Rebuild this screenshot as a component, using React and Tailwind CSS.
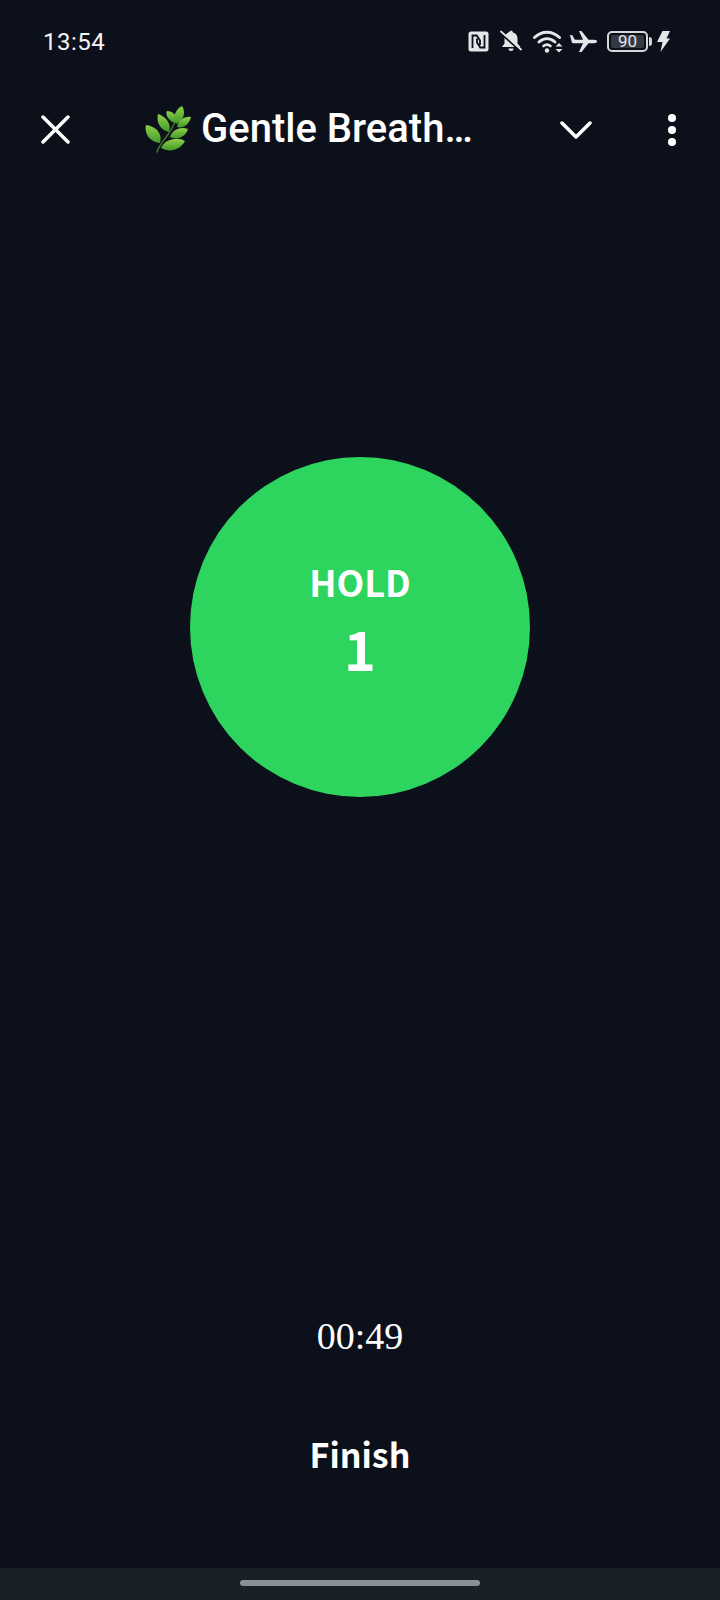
import React from 'react';

const StatusIcons = () => (
    <div className="flex items-center text-[#e4e6ea]">
        {/* NFC */}
        <svg width="21" height="21" viewBox="0 0 21 21">
            <rect x="0.500" y="0.500" width="20" height="20" rx="2.500" fill="#e4e6ea" />
            <path d="M4.500 17V4.500h4.300l3.200 5V14M16.500 4v12.500h-4.300L9 11.500V7.500" fill="none" stroke="#0c101a" strokeWidth="1.800" />
        </svg>
        {/* Bell muted */}
        <svg className="ml-[11px]" width="22" height="22" viewBox="0 0 22 22">
            <path d="M11 0.500a1.700 1.700 0 0 1 1.700 1.800C15.800 3.100 17.500 5.600 17.500 8.500v5l3 3.500H2l2.500-3.500v-5c0-1.500.4-2.900 1.200-4z" fill="#e4e6ea" />
            <path d="M8.500 18.500h5a2.500 2.500 0 0 1-5 0z" fill="#e4e6ea" />
            <path d="M1.500 3.500l18 16" stroke="#0c101a" strokeWidth="3" />
            <path d="M1 1.500l20 18" stroke="#e4e6ea" strokeWidth="1.800" strokeLinecap="round" />
        </svg>
        {/* Wifi */}
        <svg className="ml-[11px]" width="30" height="24" viewBox="0 0 30 24" fill="none">
            <path d="M1.500 8.500C9 1.500 19 1.500 26.500 8.500" stroke="#e4e6ea" strokeWidth="3" strokeLinecap="round" />
            <path d="M6 13c5-4.500 11-4.500 16 0" stroke="#e4e6ea" strokeWidth="3" strokeLinecap="round" />
            <path d="M10.500 17c2.500-2 4.500-2 7 0" stroke="#e4e6ea" strokeWidth="2.600" strokeLinecap="round" />
            <circle cx="14" cy="21.500" r="2.200" fill="#e4e6ea" />
            <path d="M26 14l3.500 3.500h-7zM26 23.500l3.500-3.500h-7z" fill="#e4e6ea" />
        </svg>
        {/* Airplane */}
        <svg className="ml-[7px]" width="27" height="21" viewBox="0 0 27 21">
            <path d="M0 4h2l3 4.800h8L9 0h2.500l7 8.800h5.500c2 0 3 .7 3 1.700s-1 1.700-3 1.700h-5.500L11.500 21H9l4-8.800H3.500C2 12.200 1.500 11 1.500 10z" fill="#e4e6ea" />
        </svg>
        {/* Battery */}
        <div className="ml-[10px] flex items-center">
            <div className="flex h-[21px] w-[41px] items-center rounded-[5px] border-2 border-[#d5d7db] p-[2px]">
                <div className="flex h-full w-[33px] items-center justify-center rounded-[2px] bg-[#343841] text-[17px] leading-none text-[#e4e6ea]">
                    90
                </div>
            </div>
            <div className="ml-[1px] h-[9px] w-[3px] rounded-r-sm bg-[#d5d7db]" />
        </div>
        {/* Charging */}
        <svg className="ml-[5px]" width="13" height="21" viewBox="0 0 13 21">
            <path d="M5.500 0h7.500L9.500 7.500H13L3.500 21l2-10H0z" fill="#e4e6ea" />
        </svg>
    </div>
);

const Herb = () => (
    <svg className="mt-[2px]" width="46" height="48" viewBox="0 0 46 48">
        <defs>
            <linearGradient id="leaf" x1="0" y1="0" x2="0" y2="1">
                <stop offset="0" stopColor="#8fd048" />
                <stop offset="1" stopColor="#3f9a2a" />
            </linearGradient>
        </defs>
        <path d="M12 46C15 36 24 30 28 20C30 15 32 12 34 8" fill="none" stroke="#3f6b2a" strokeWidth="1.600" strokeLinecap="round" />
        {/* left side leaves */}
        <path d="M15 37C5 36-1 28 1 19C10 20 18 27 15 37z" fill="url(#leaf)" />
        <path d="M24 26C15 24 11 16 13 8C20 10 27 17 24 26z" fill="url(#leaf)" />
        <path d="M30 17C23 15 20 8 22 5C28 5 34 10 30 17z" fill="url(#leaf)" />
        {/* right side leaves */}
        <path d="M31 18C27 10 31 3 37 0C41 6 39 15 31 18z" fill="url(#leaf)" />
        <path d="M32 21C33 14 40 10 46 11C44 18 39 23 32 21z" fill="url(#leaf)" />
        <path d="M25 31C27 24 35 20 43 23C41 30 33 35 25 31z" fill="url(#leaf)" />
        <path d="M16 42C19 34 32 30 40 35C35 44 25 47 16 42z" fill="url(#leaf)" />
    </svg>
);

const App = () => {
    return (
        <div className="flex h-[1600px] w-[720px] flex-col overflow-hidden bg-[#0c101a] text-white [font-family:Roboto,sans-serif]">
            {/* Status bar */}
            <div className="flex h-[82px] items-center justify-between pl-[43px] pr-[50px]">
                <span className="pt-[1px] text-[24px] leading-none tracking-[0.5px] text-[#f3f4f6]">13:54</span>
                <StatusIcons />
            </div>

            {/* Toolbar */}
            <div className="flex h-[94px] items-center">
                <svg className="ml-[41px]" width="29" height="29" viewBox="0 0 29 29" fill="none" stroke="white" strokeWidth="3.500" strokeLinecap="round">
                    <path d="M2 2l25 25M27 2L2 27" />
                </svg>
                <div className="ml-[75px] flex items-center">
                    <Herb />
                    <span className="ml-[10px] text-[40px] font-medium leading-none">Gentle Breath…</span>
                </div>
                <svg className="ml-auto mt-[3px]" width="32" height="19" viewBox="0 0 32 19" fill="none" stroke="white" strokeWidth="3.500" strokeLinecap="round" strokeLinejoin="round">
                    <path d="M2 2l14 14L30 2" />
                </svg>
                <div className="ml-[76px] mr-[44px] mt-[1px] flex flex-col gap-[4px]">
                    <div className="h-[8px] w-[8px] rounded-full bg-white" />
                    <div className="h-[8px] w-[8px] rounded-full bg-white" />
                    <div className="h-[8px] w-[8px] rounded-full bg-white" />
                </div>
            </div>

            {/* Breathing circle */}
            <div className="flex justify-center pt-[281px]">
                <div className="flex h-[340px] w-[340px] flex-col items-center rounded-full bg-[#2dd55f] pt-[99px] [font-family:'Noto_Sans_CJK_SC',sans-serif] font-bold">
                    <span className="text-[36px] leading-[50px]">HOLD</span>
                    <span className="mt-[4px] text-[54px] leading-[76px]">1</span>
                </div>
            </div>

            {/* Timer and finish */}
            <div className="flex flex-1 flex-col items-center">
                <span className="mt-[519px] text-[38px] leading-[40px] [font-family:'Liberation_Serif',serif]">00:49</span>
                <span className="mt-[76px] text-[34px] font-bold leading-[44px] [font-family:'Noto_Sans_CJK_SC',sans-serif]">Finish</span>
            </div>

            {/* Navigation bar */}
            <div className="flex h-[32px] items-start justify-center bg-[#1a2028] pt-[12px]">
                <div className="h-[6px] w-[240px] rounded-full bg-[#8a8f97]" />
            </div>
        </div>
    );
};

export default App;
